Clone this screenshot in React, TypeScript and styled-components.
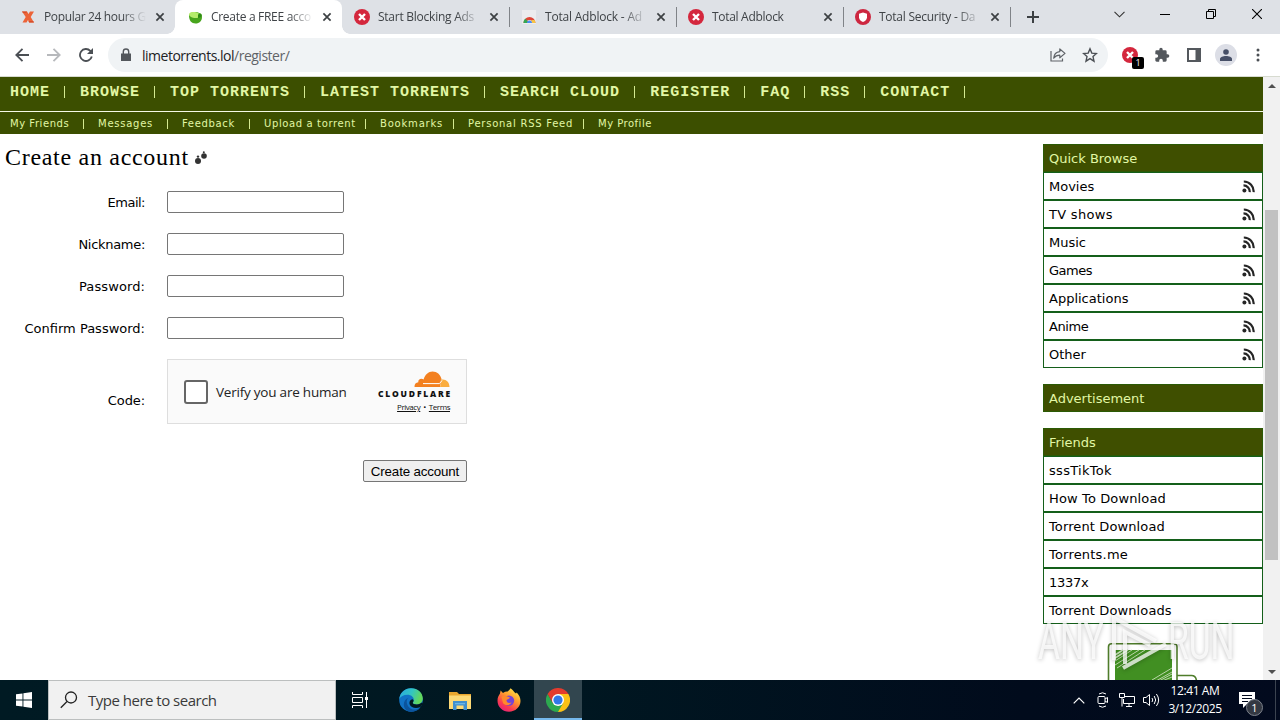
import React from "react";
import styled, { createGlobalStyle } from "styled-components";

const Global = createGlobalStyle`
  * { box-sizing: border-box; }
  html, body { margin: 0; padding: 0; overflow: hidden; background: #fff; }
  svg { display: block; flex: none; }
`;

const uiFont = `"Open Sans", "Noto Sans", sans-serif`;
const pageFont = `"DejaVu Sans", Verdana, sans-serif`;

const Screen = styled.div`
  width: 1280px;
  height: 720px;
  display: flex;
  flex-direction: column;
  overflow: hidden;
  background: #fff;
`;

/* ---------- browser chrome ---------- */

const TabStrip = styled.div`
  height: 34px;
  flex: none;
  display: flex;
  padding-left: 8px;
  background: #dee1e6;
`;

const Tab = styled.div<{ $active?: boolean; $divider?: boolean }>`
  position: relative;
  width: 167px;
  height: 34px;
  display: flex;
  align-items: center;
  padding: 0 0 0 12px;
  background: ${(p) => (p.$active ? "#fff" : "transparent")};
  border-radius: 8px 8px 0 0;
  &::before, &::after {
    content: "";
    display: ${(p) => (p.$active || p.$divider ? "block" : "none")};
    position: absolute;
    bottom: 0;
  }
  &::before {
    left: -8px;
    width: ${(p) => (p.$active ? "8px" : "0")};
    height: 8px;
    background: radial-gradient(circle at 0 0, transparent 7.5px, #fff 8px);
  }
  &::after {
    right: ${(p) => (p.$active ? "-8px" : "-1px")};
    bottom: ${(p) => (p.$active ? "0" : "7px")};
    width: ${(p) => (p.$active ? "8px" : "1px")};
    height: ${(p) => (p.$active ? "8px" : "20px")};
    background: ${(p) => (p.$active ? "radial-gradient(circle at 100% 0, transparent 7.5px, #fff 8px)" : "#808388")};
  }
`;

const TabTitle = styled.span<{ $track: number }>`
  width: 103px;
  margin: 0 8px 0 8px;
  white-space: nowrap;
  font: 12px/18px ${uiFont};
  letter-spacing: ${(p) => p.$track}px;
  color: #3f4347;
  mask-image: linear-gradient(to right, #000 78px, transparent 102px);
`;

const NewTab = styled.div`
  width: 46px;
  display: flex;
  align-items: center;
  justify-content: center;
`;

const WindowButtons = styled.div`
  margin-left: auto;
  display: flex;
  height: 28px;
`;

const WindowButton = styled.div`
  width: 46px;
  display: flex;
  align-items: center;
  justify-content: center;
`;

const Toolbar = styled.div`
  height: 43px;
  flex: none;
  display: flex;
  align-items: center;
  padding: 0 6px;
  background: #fff;
  border-bottom: 1px solid #d7dbd0;
`;

const ToolButton = styled.div`
  position: relative;
  width: 32px;
  height: 32px;
  display: flex;
  align-items: center;
  justify-content: center;
`;

const AddressBar = styled.div`
  width: 1000px;
  height: 34px;
  margin: 0 6px;
  padding: 0 2px 0 12px;
  display: flex;
  align-items: center;
  border-radius: 17px;
  background: #f0f3f5;
`;

const Url = styled.span`
  margin-left: 10px;
  padding-top: 1px;
  flex: 1;
  font: 14px/20px ${uiFont};
  letter-spacing: -0.5px;
  color: #5f6368;
  b { font-weight: 400; color: #202124; }
`;

const Badge = styled.span`
  position: absolute;
  left: 18px;
  top: 18px;
  width: 12px;
  height: 12px;
  border-radius: 2px;
  background: #000;
  color: #fff;
  font: 9px/12px ${uiFont};
  text-align: center;
`;

const Avatar = styled.div`
  width: 22px;
  height: 22px;
  border-radius: 50%;
  background: #dcdee6;
  display: flex;
  align-items: center;
  justify-content: center;
`;

/* ---------- web page ---------- */

const Viewport = styled.div`
  position: relative;
  height: 603px;
  flex: none;
  display: flex;
  overflow: hidden;
`;

const Page = styled.div`
  width: 1263px;
  display: flex;
  flex-direction: column;
`;

const MainNav = styled.nav`
  height: 34px;
  flex: none;
  display: flex;
  padding: 5px 0 0 10px;
  background: #3c4f00;
`;

const MainLink = styled.a`
  display: flex;
  height: 20px;
  font: bold 15px/21px "Liberation Mono", "Courier New", monospace;
  letter-spacing: 1px;
  color: #e2f7a5;
  white-space: pre;
  &::after {
    content: "";
    width: 1px;
    height: 12px;
    margin: 4px 15px 0 14px;
    background: #d5ea92;
  }
`;

const SubNav = styled.nav`
  height: 23px;
  flex: none;
  display: flex;
  padding-left: 10px;
  border-top: 1px solid #f5f9e6;
  background: #3c4f00;
`;

const SubLink = styled.a<{ $width: number; $last?: boolean; $track: number }>`
  width: ${(p) => p.$width}px;
  display: flex;
  justify-content: space-between;
  font: 10px/23px ${pageFont};
  letter-spacing: ${(p) => p.$track}px;
  white-space: nowrap;
  color: #e2f7a5;
  &::after {
    content: "";
    display: ${(p) => (p.$last ? "none" : "block")};
    width: 1px;
    height: 10px;
    margin: 7px 14px 0 0;
    background: #d5ea92;
  }
`;

const Columns = styled.div`
  flex: 1;
  display: flex;
  justify-content: space-between;
`;

const Main = styled.main`
  width: 480px;
  font: 13px/20px ${pageFont};
  color: #000;
`;

const Heading = styled.h1`
  display: flex;
  align-items: center;
  gap: 5px;
  height: 47px;
  margin: 0 0 10px;
  padding-left: 5px;
  font: 24px/47px "Liberation Serif", Georgia, serif;
  letter-spacing: 0.7px;
`;

const FormRow = styled.div<{ $height?: number }>`
  display: grid;
  grid-template-columns: 145px 300px;
  column-gap: 22px;
  align-items: center;
  height: ${(p) => p.$height ?? 22}px;
  margin-bottom: 20px;
`;

const Label = styled.label<{ $shift?: number; $track?: number }>`
  text-align: right;
  padding-top: ${(p) => p.$shift ?? 2}px;
  letter-spacing: ${(p) => p.$track ?? 0}px;
  white-space: nowrap;
`;

const Field = styled.input`
  width: 177px;
  height: 22px;
  border: 1px solid #767676;
  border-radius: 2px;
  background: #fff;
  outline: none;
`;

const Challenge = styled.div`
  width: 300px;
  height: 65px;
  display: flex;
  align-items: center;
  padding: 0 16px;
  border: 1px solid #dedede;
  background: #fafafa;
`;

const CheckSquare = styled.span`
  width: 24px;
  height: 24px;
  border: 2px solid #666;
  border-radius: 3px;
  background: #fff;
`;

const ChallengeText = styled.span`
  margin-left: 8px;
  flex: 1;
  font: 13.5px/20px ${uiFont};
  letter-spacing: -0.22px;
  color: #232323;
  white-space: nowrap;
`;

const Brand = styled.div`
  width: 76px;
  display: flex;
  flex-direction: column;
  align-items: flex-end;
`;

const BrandName = styled.span`
  margin: 1px -2px 0 0;
  font: 800 8.5px/9px "Open Sans", sans-serif;
  letter-spacing: 1.8px;
  color: #111;
`;

const BrandLinks = styled.span`
  margin-top: 4px;
  display: flex;
  gap: 3px;
  font: 8px/10px ${uiFont};
  letter-spacing: -0.45px;
  color: #111;
  u { text-underline-offset: 1px; }
`;

const SubmitRow = styled.div`
  width: 467px;
  display: flex;
  justify-content: flex-end;
  padding-top: 16px;
`;

const Submit = styled.button`
  width: 104px;
  height: 22px;
  padding: 1px 0 0;
  border: 1px solid #767676;
  border-radius: 2px;
  background: #efefef;
  color: #000;
  font: 13.333px/19px "Liberation Sans", Arial, sans-serif;
  letter-spacing: -0.15px;
  white-space: nowrap;
`;

const Sidebar = styled.aside`
  width: 220px;
  padding-top: 10px;
  display: flex;
  flex-direction: column;
  gap: 16px;
  font: 13px/26px ${pageFont};
`;

const PanelHead = styled.div`
  height: 28px;
  padding: 1px 0 0 5px;
  border: 1px solid #2b5a05;
  background: #3f4f00;
  color: #e2f7a5;
`;

const PanelRow = styled.div<{ $track?: number }>`
  height: 28px;
  display: flex;
  align-items: center;
  justify-content: space-between;
  padding: 0 7px 0 5px;
  border: 1px solid #145f1a;
  letter-spacing: ${(p) => p.$track ?? 0}px;
  color: #000;
`;

const PanelText = styled.span`
  padding-top: 2px;
`;

const Artwork = styled.div`
  margin: 3px 0 0 64px;
  height: 38px;
`;

const Scrollbar = styled.div`
  width: 17px;
  display: flex;
  flex-direction: column;
  align-items: center;
  justify-content: space-between;
  background: #f1f1f1;
`;

const ScrollTrack = styled.div`
  flex: 1;
  padding-top: 116px;
`;

const Thumb = styled.div`
  width: 13px;
  height: 350px;
  background: #c1c1c1;
`;

const ArrowBox = styled.div`
  width: 17px;
  height: 17px;
  display: flex;
  align-items: center;
  justify-content: center;
`;

const Watermark = styled.div`
  position: absolute;
  left: 1038px;
  top: 537px;
  width: 200px;
  height: 60px;
  color: rgba(255, 255, 255, 0.75);
  filter: drop-shadow(0 1px 2px rgba(0, 0, 0, 0.33));
`;

const WatermarkWord = styled.span<{ $left: number }>`
  position: absolute;
  left: ${(p) => p.$left}px;
  top: 2px;
  font: 400 51px/52px Roboto, sans-serif;
  transform: scaleX(0.66);
  transform-origin: 0 0;
`;

const WatermarkPlay = styled.svg`
  position: absolute;
  left: 72px;
  top: 0;
`;

/* ---------- taskbar ---------- */

const Taskbar = styled.div`
  height: 40px;
  flex: none;
  display: flex;
  background: linear-gradient(to right, #001a23 0, #001721 45%, #010b1c 80%, #020a1e 100%);
`;

const TaskItem = styled.div<{ $active?: boolean; $width: number }>`
  width: ${(p) => p.$width}px;
  display: flex;
  align-items: center;
  justify-content: center;
  background: ${(p) => (p.$active ? "#32464f" : "transparent")};
  border-bottom: ${(p) => (p.$active ? "2px solid #76b9ed" : "0")};
  padding-top: ${(p) => (p.$active ? "2px" : "0")};
`;

const SearchBox = styled.div`
  width: 288px;
  display: flex;
  align-items: center;
  gap: 10px;
  padding-left: 11px;
  border: 1px solid #bcbfbf;
  background: #f1f1f1;
  font: 15px/22px ${uiFont};
  letter-spacing: -0.5px;
  color: #3a3a3a;
`;

const Tray = styled.div`
  margin-left: auto;
  display: flex;
  padding-right: 4px;
`;

const Clock = styled.div`
  width: 64px;
  padding-top: 2px;
  text-align: center;
  font: 12px/18px ${uiFont};
  letter-spacing: -0.4px;
  color: #fff;
  white-space: nowrap;
`;

const Notice = styled.div`
  position: relative;
  width: 48px;
  padding: 12px 0 0 12px;
`;

const NoticeCount = styled.span`
  position: absolute;
  left: 19px;
  top: 19px;
  width: 17px;
  height: 17px;
  border: 1px solid #7d828c;
  border-radius: 50%;
  background: #333842;
  color: #fff;
  font: 11px/15px ${uiFont};
  text-align: center;
`;

const ShowDesktop = styled.div`
  width: 1px;
  background: #3b4350;
`;

/* ---------- drawings ---------- */

const CloseX = () => (
  <svg width="10" height="10" viewBox="0 0 10 10" stroke="#3c4043" strokeWidth="1.7">
    <path d="M1.4 1.4 8.6 8.6M8.6 1.4 1.4 8.6" />
  </svg>
);

const OrangeX = () => (
  <svg width="16" height="16" viewBox="0 0 16 16">
    <path d="M2 2.500h5l1.500 2.500L10 2.500h4L10.700 8l3.300 5.500H9.200L8 11l-1.500 2.500h-4L5.700 8Z" fill="#ec6338" />
    <path d="M2 2.500h5l-.7 1.500H3ZM9.200 13.500 8.500 12h4.700l.8 1.500Z" fill="#d64f2b" />
  </svg>
);

const Lime = () => (
  <svg width="16" height="16" viewBox="0 0 16 16">
    <path d="M2 6.500C2 11.500 4.500 14.500 8.500 14.500S15 12 15 8c0-3-1-4-3-4-2-1.500-9-1.500-10 2.500Z" fill="#48a51d" />
    <ellipse cx="7.500" cy="6" rx="5.500" ry="3" fill="#b5ec6b" transform="rotate(8 7.500 6)" />
    <path d="M11 5.500c2-1.500 3.500-.5 3.500 1s-2 2.500-3.500 2.500Z" fill="#2f8a16" />
  </svg>
);

const RedX = () => (
  <svg width="16" height="16" viewBox="0 0 16 16">
    <circle cx="8" cy="8" r="8" fill="#d4273d" />
    <path d="m5 5 6 6m0-6-6 6" stroke="#fff" strokeWidth="2.400" />
  </svg>
);

const StoreIcon = () => (
  <svg width="16" height="16" viewBox="0 0 16 16">
    <path d="M1 1h14v14H1z" fill="#ececee" />
    <path d="M2.500 14a6 6 0 0 1 12 0h-3a3 3 0 0 0-6 0Z" fill="#df4637" />
    <path d="M2.500 14c0-2 .6-3.300 1.900-4.200L7 12.500V14Z" fill="#35a853" />
    <path d="M10.500 11h3.200l.8 3h-4Z" fill="#f6c344" />
    <path d="M6 14a2.500 2.500 0 0 1 5 0Z" fill="#4c8bf5" />
  </svg>
);

const RedShield = () => (
  <svg width="16" height="16" viewBox="0 0 16 16">
    <circle cx="8" cy="8" r="8" fill="#cd2740" />
    <path d="M8 3.500 12 4.800v3.400c0 2.300-1.800 3.900-4 4.800-2.200-.9-4-2.500-4-4.800V4.800Z" fill="#fff" />
  </svg>
);

const Rss = () => (
  <svg width="13" height="13" viewBox="0 0 13 13" fill="none" stroke="#252525" strokeWidth="2.200">
    <circle cx="2.400" cy="10.600" r="2" fill="#252525" stroke="none" />
    <path d="M1.500 5.400a6.200 6.200 0 0 1 6.200 6.800M1.800 1.500A9.800 9.800 0 0 1 11.600 12.200" />
  </svg>
);

const Cloud = () => (
  <svg width="36" height="17" viewBox="0 0 36 17">
    <path d="M.5 16C.3 13 2 11.500 4.300 11.300 3.800 8 7.500 6.700 9.600 8.500 11 3.500 14.500.5 18.500.5c4.500 0 8 3 9 7.500l-1.500 8Z" fill="#f38020" />
    <path d="m26 16 1.300-5.500-1-1.500c5-1.500 9 1.500 9.200 7Z" fill="#faad3f" />
    <path d="M9 12.600h16.500l2.500-3.200" fill="none" stroke="#fff" strokeWidth="1" />
  </svg>
);

const Comments = () => (
  <svg width="14" height="14" viewBox="0 0 14 14" fill="#333">
    <circle cx="4" cy="10" r="3" />
    <circle cx="10" cy="5" r="2.800" />
    <circle cx="4" cy="5.600" r="1.200" />
    <circle cx="9.800" cy="1.200" r="1" />
  </svg>
);

const MonitorArt = () => (
  <svg width="92" height="38" viewBox="0 0 92 38" fill="none">
    <path d="M1.500 38V4Q1.500.8 4.500.8h62Q70 .8 70 4v34M70 32.500h14.500q4.500 0 5 5.500" stroke="#4f7d2b" strokeWidth="1.600" />
    <path d="M8 7h57v31H8z" fill="#418f22" />
    <path d="M8 18 25 7M8 22 32 7M10 25 38 7M49 38 65 29M52 38 65 31M55 38 65 34M45 37 65 25" stroke="#b9d5a8" strokeWidth="1" />
    <path d="M8 12 16 7M8 15 21 7" stroke="#c9dfbc" strokeWidth="1.500" />
  </svg>
);

const WindowsLogo = () => (
  <svg width="16" height="16" viewBox="0 0 16 16" fill="#fff">
    <path d="M0 2.300 6.500 1.400v6.100H0ZM7.400 1.200 16 0v7.500H7.400ZM0 8.400h6.500v6.200L0 13.700ZM7.400 8.400H16V16l-8.600-1.200Z" />
  </svg>
);

const Edge = () => (
  <svg width="24" height="24" viewBox="0 0 24 24">
    <defs>
      <linearGradient id="edgeTop" x1="0" y1="0" x2="1" y2=".3">
        <stop offset="0" stopColor="#2aa9e0" />
        <stop offset=".55" stopColor="#32c5c4" />
        <stop offset="1" stopColor="#63d85a" />
      </linearGradient>
    </defs>
    <circle cx="12" cy="12" r="11.800" fill="#1173c6" />
    <path d="M.3 11C1 4.500 6 .2 12 .2c7 0 11.800 4.800 11.800 10.300 0 3.800-2.800 6-6 6-2.500 0-4-.8-4-1.700 0-.8 1-1.300 1-3C14.800 9 12 6.800 8.500 6.800 4.500 6.800 1.500 8.500.3 11Z" fill="url(#edgeTop)" />
    <path d="M9.500 9.800C7 11.500 7 17 10.800 20c3 2.300 7 2 10.700-.5-2.500 3-6 4.400-9.500 4.300C7 23.400 4.800 20 4.800 16.500c0-3 2-5.700 4.700-6.700Z" fill="#0b549d" />
    <path d="M13.800 14.800c0 .9 1.500 1.700 4 1.700 1.800 0 3.300-.6 4.400-1.700 1 0 1.800.2 1.500 1-.3 1-1 2-2.200 3.200-5 2.300-9.500.5-10.800-2.500-.8-2 .2-4.600 2.500-5.200 2.500.7 1 2.500.6 3.500Z" fill="#001821" />
  </svg>
);

const Folder = () => (
  <svg width="22" height="19" viewBox="0 0 22 19">
    <path d="M0 1h8l2 2h12v15H0Z" fill="#e9a72f" />
    <path d="M0 4.500h22V18H0Z" fill="#fcd976" />
    <path d="M4 10h14v9h-3.500v-4.500h-7V19H4Z" fill="#3f8fcf" />
    <path d="M6 12h10v1.300H6Z" fill="#68b5e8" />
  </svg>
);

const Firefox = () => (
  <svg width="24" height="24" viewBox="0 0 24 24">
    <defs>
      <linearGradient id="fox" x1=".85" y1=".05" x2=".25" y2="1">
        <stop offset="0" stopColor="#ffe94a" />
        <stop offset=".4" stopColor="#ff9a2e" />
        <stop offset=".75" stopColor="#fb3b50" />
        <stop offset="1" stopColor="#e32178" />
      </linearGradient>
    </defs>
    <path d="M3 5.500 3.600 2.500 6 5c1.500-1 3-1.500 4.700-1.400C12 2.500 13 1 13.500.2c2.500 1.500 3 3.500 5.500 5.300l.7-1c2.500 2.500 3.800 5.500 3.800 8.500C23.500 19 18.300 23.700 12 23.700S.5 19 .5 12.700c0-3 1-5 2.500-7.200Z" fill="url(#fox)" />
    <circle cx="12" cy="12.600" r="5.200" fill="#7443d8" />
    <path d="M4.500 9c2-2 4-1 6-.5l2.500 1c-.5 1.500-2.500 1.500-3.500 2.500 0 2.500 2 3.500 5 2.500-1.500 3-6.500 3.500-8.500.5Z" fill="#ff8a2b" />
  </svg>
);

const Chrome = () => (
  <svg width="24" height="24" viewBox="0 0 24 24">
    <path d="M12 12V6h10.400A12 12 0 0 1 12 24Z" fill="#fbc116" />
    <path d="M1.600 6 6.800 15 12 18l5.200-3L12 24A12 12 0 0 1 1.600 6Z" fill="#2da94f" />
    <path d="M1.600 6A12 12 0 0 1 22.400 6H12L6.800 9v6Z" fill="#e33b2e" />
    <circle cx="12" cy="12" r="6" fill="#fff" />
    <circle cx="12" cy="12" r="4.600" fill="#3078e8" />
  </svg>
);

/* ---------- content ---------- */

const tabs = [
  { title: "Popular 24 hours G", icon: <OrangeX />, track: -0.35 },
  { title: "Create a FREE acco", icon: <Lime />, active: true, track: -0.3 },
  { title: "Start Blocking Ads", icon: <RedX />, divider: true, track: -0.25 },
  { title: "Total Adblock - Ad", icon: <StoreIcon />, divider: true, track: -0.2 },
  { title: "Total Adblock", icon: <RedX />, divider: true, track: -0.3 },
  { title: "Total Security - Da", icon: <RedShield />, divider: true, track: -0.25 },
];

const mainLinks = ["HOME", "BROWSE", "TOP TORRENTS", "LATEST TORRENTS", "SEARCH CLOUD", "REGISTER", "FAQ", "RSS", "CONTACT"];

const subLinks: [string, number, number][] = [
  ["My Friends", 88, 0.55],
  ["Messages", 84, 0.75],
  ["Feedback", 82, 0.65],
  ["Upload a torrent", 116, 0.62],
  ["Bookmarks", 88, 0.8],
  ["Personal RSS Feed", 130, 0.75],
  ["My Profile", 70, 0.5],
];

const fields: [string, number][] = [
  ["Email:", -0.5],
  ["Nickname:", -0.3],
  ["Password:", 0.1],
  ["Confirm Password:", 0],
];

const categories: [string, number][] = [
  ["Movies", 0],
  ["TV shows", 0.3],
  ["Music", 0],
  ["Games", -0.5],
  ["Applications", 0],
  ["Anime", -0.4],
  ["Other", 0],
];

const friends: [string, number][] = [
  ["sssTikTok", 0.3],
  ["How To Download", 0.13],
  ["Torrent Download", 0.12],
  ["Torrents.me", 0.2],
  ["1337x", -0.3],
  ["Torrent Downloads", 0.12],
];

export default function App() {
  return (
    <Screen>
      <Global />
      <TabStrip>
        {tabs.map((t, i) => (
          <Tab key={i} $active={t.active} $divider={t.divider}>
            {t.icon}
            <TabTitle $track={t.track}>{t.title}</TabTitle>
            <CloseX />
          </Tab>
        ))}
        <NewTab>
          <svg width="12" height="12" viewBox="0 0 12 12" stroke="#3c4043" strokeWidth="2"><path d="M6 0v12M0 6h12" /></svg>
        </NewTab>
        <WindowButtons>
          <WindowButton>
            <svg width="11" height="7" viewBox="0 0 11 7" fill="none" stroke="#333" strokeWidth="1.1"><path d="m.5.8 5 5 5-5" /></svg>
          </WindowButton>
          <WindowButton>
            <svg width="10" height="2" viewBox="0 0 10 2"><path d="M0 1h10v1H0Z" fill="#000" /></svg>
          </WindowButton>
          <WindowButton>
            <svg width="10" height="10" viewBox="0 0 10 10" fill="none" stroke="#000"><path d="M.5 2.500h7v7h-7ZM2.500 2.500v-2h7v7h-2" /></svg>
          </WindowButton>
          <WindowButton>
            <svg width="10" height="10" viewBox="0 0 10 10" stroke="#000" strokeWidth="1.100"><path d="m0 0 10 10M10 0 0 10" /></svg>
          </WindowButton>
        </WindowButtons>
      </TabStrip>

      <Toolbar>
        <ToolButton>
          <svg width="14" height="14" viewBox="0 0 14 14" fill="none" stroke="#4b4f54" strokeWidth="1.8"><path d="M14 7H1.500M7.500.8 1.300 7l6.200 6.200" /></svg>
        </ToolButton>
        <ToolButton>
          <svg width="14" height="14" viewBox="0 0 14 14" fill="none" stroke="#b7b9bc" strokeWidth="1.8"><path d="M0 7h12.500M6.500.8 12.700 7l-6.200 6.200" /></svg>
        </ToolButton>
        <ToolButton>
          <svg width="14" height="14" viewBox="0 0 14 14" fill="none" stroke="#4b4f54" strokeWidth="1.8"><path d="M12.800 8.500A6 6 0 1 1 11.300 2.800L13 4.500" /><path d="M14 0v6H8Z" fill="#4b4f54" stroke="none" /></svg>
        </ToolButton>
        <AddressBar>
          <svg width="12" height="14" viewBox="0 0 12 14"><path d="M1 5.500h10V13H1Z" fill="#53575c" /><path d="M3.300 6V3.700a2.700 2.700 0 0 1 5.400 0V6" fill="none" stroke="#53575c" strokeWidth="1.400" /></svg>
          <Url><b>limetorrents.lol</b>/register/</Url>
          <ToolButton>
            <svg width="16" height="14" viewBox="0 0 16 14" fill="none" stroke="#5f6368" strokeWidth="1.200"><path d="M1 3v10h11.500v-2.500" /><path d="M9.800 1v2.600C6 4 4 6.500 3.700 10.200c1.500-2 3.300-3 6.100-3v2.600L15 5.400Z" strokeLinejoin="round" /></svg>
          </ToolButton>
          <ToolButton>
            <svg width="16" height="16" viewBox="0 0 16 16" fill="none" stroke="#4b4f54" strokeWidth="1.400"><path d="m8 1.800 1.800 4.300 4.700.4L11 9.600l1 4.600-4-2.500-4 2.500 1-4.600L1.500 6.500l4.700-.4Z" /></svg>
          </ToolButton>
        </AddressBar>
        <ToolButton>
          <RedX />
          <Badge>1</Badge>
        </ToolButton>
        <ToolButton>
          <svg width="16" height="16" viewBox="0 0 24 24" fill="#54585d"><path d="M20.500 11H19V7a2 2 0 0 0-2-2h-4V3.500a2.500 2.500 0 0 0-5 0V5H4a2 2 0 0 0-2 2v3.800h1.500a2.700 2.700 0 0 1 0 5.400H2V20c0 1.100.9 2 2 2h3.800v-1.500a2.700 2.700 0 0 1 5.400 0V22H17a2 2 0 0 0 2-2v-4h1.500a2.500 2.500 0 0 0 0-5Z" /></svg>
        </ToolButton>
        <ToolButton>
          <svg width="14" height="14" viewBox="0 0 14 14"><path d="M0 0h14v14H0Z" fill="#54585d" /><path d="M2 2h6.500v10H2Z" fill="#fff" /></svg>
        </ToolButton>
        <ToolButton>
          <Avatar>
            <svg width="12" height="12" viewBox="0 0 12 12" fill="#464f67"><circle cx="6" cy="3" r="2.800" /><path d="M0 12V10c0-2 3-3 6-3s6 1 6 3v2Z" /></svg>
          </Avatar>
        </ToolButton>
        <ToolButton>
          <svg width="4" height="14" viewBox="0 0 4 14" fill="#4b4f54"><circle cx="2" cy="2" r="1.500" /><circle cx="2" cy="7" r="1.500" /><circle cx="2" cy="12" r="1.500" /></svg>
        </ToolButton>
      </Toolbar>

      <Viewport>
        <Page>
          <MainNav>{mainLinks.map((l) => <MainLink key={l}>{l}</MainLink>)}</MainNav>
          <SubNav>
            {subLinks.map(([l, w, t], i) => (
              <SubLink key={l} $width={w} $track={t} $last={i === subLinks.length - 1}>{l}</SubLink>
            ))}
          </SubNav>
          <Columns>
            <Main>
              <Heading>Create an account <Comments /></Heading>
              {fields.map(([f, t]) => (
                <FormRow key={f}>
                  <Label $track={t}>{f}</Label>
                  <Field />
                </FormRow>
              ))}
              <FormRow $height={65}>
                <Label $shift={18} $track={-0.1}>Code:</Label>
                <Challenge>
                  <CheckSquare />
                  <ChallengeText>Verify you are human</ChallengeText>
                  <Brand>
                    <Cloud />
                    <BrandName>CLOUDFLARE</BrandName>
                    <BrandLinks><u>Privacy</u><span>•</span><u>Terms</u></BrandLinks>
                  </Brand>
                </Challenge>
              </FormRow>
              <SubmitRow><Submit>Create account</Submit></SubmitRow>
            </Main>
            <Sidebar>
              <div>
                <PanelHead>Quick Browse</PanelHead>
                {categories.map(([c, t]) => <PanelRow key={c} $track={t}><PanelText>{c}</PanelText><Rss /></PanelRow>)}
              </div>
              <PanelHead>Advertisement</PanelHead>
              <div>
                <PanelHead>Friends</PanelHead>
                {friends.map(([f, t]) => <PanelRow key={f} $track={t}><PanelText>{f}</PanelText></PanelRow>)}
              </div>
              <Artwork><MonitorArt /></Artwork>
            </Sidebar>
          </Columns>
        </Page>
        <Scrollbar>
          <ArrowBox><svg width="8" height="4" viewBox="0 0 8 4"><path d="M4 0 8 4H0Z" fill="#505050" /></svg></ArrowBox>
          <ScrollTrack><Thumb /></ScrollTrack>
          <ArrowBox><svg width="8" height="4" viewBox="0 0 8 4"><path d="M0 0h8L4 4Z" fill="#505050" /></svg></ArrowBox>
        </Scrollbar>
        <Watermark>
          <WatermarkWord $left={0}>ANY</WatermarkWord>
          <WatermarkPlay width="60" height="60" viewBox="0 0 60 60" fill="none" stroke="rgba(255,255,255,.75)" strokeWidth="4">
            <path d="M4 46V4l42 23M15 50V18l25 13M13 54l43-24" />
          </WatermarkPlay>
          <WatermarkWord $left={130}>RUN</WatermarkWord>
        </Watermark>
      </Viewport>

      <Taskbar>
        <TaskItem $width={48}><WindowsLogo /></TaskItem>
        <SearchBox>
          <svg width="18" height="18" viewBox="0 0 18 18" fill="none" stroke="#222" strokeWidth="1.300"><circle cx="11" cy="6.500" r="5.500" /><path d="M7 10.500.8 16.800" /></svg>
          Type here to search
        </SearchBox>
        <TaskItem $width={49}>
          <svg width="17" height="16" viewBox="0 0 17 16" fill="none" stroke="#fff"><path d="M.5 0v2.500h10V0M.5 5.500h10v5H.5ZM.5 16v-2.500h10V16M14.500 0v16" /><path d="M13 5h3v3h-3Z" fill="#fff" stroke="none" /></svg>
        </TaskItem>
        <TaskItem $width={52}><Edge /></TaskItem>
        <TaskItem $width={46}><Folder /></TaskItem>
        <TaskItem $width={51}><Firefox /></TaskItem>
        <TaskItem $active $width={48}><Chrome /></TaskItem>
        <Tray>
          <TaskItem $width={24}>
            <svg width="12" height="7" viewBox="0 0 12 7" fill="none" stroke="#fff" strokeWidth="1.200"><path d="m.7 6.300 5.300-5.300 5.300 5.300" /></svg>
          </TaskItem>
          <TaskItem $width={24}>
            <svg width="12" height="16" viewBox="0 0 12 16" fill="none" stroke="#fff"><rect x="1" y="4.500" width="7" height="7" rx="1" /><path d="m8 7 2.500-1.500v5L8 9M2 2Q5.500-.5 9 2M2 14q3.500 2.500 7 0" /></svg>
          </TaskItem>
          <TaskItem $width={24}>
            <svg width="16" height="14" viewBox="0 0 16 14" fill="none" stroke="#fff"><path d="M6 3.500h9.500v7h-11V6M10 10.500v3M7 13.500h6M.5.500h5v4h-5ZM3 4.500v9" /></svg>
          </TaskItem>
          <TaskItem $width={24}>
            <svg width="17" height="14" viewBox="0 0 17 14" fill="none" stroke="#fff"><path d="M.5 4.500h2.500L6.500 1.500v11L3 9.500H.5ZM9 5q1.500 2 0 4M11.200 3q3 4 0 8M13.400 1q4.500 6 0 12" /></svg>
          </TaskItem>
          <Clock>12:41 AM<br />3/12/2025</Clock>
          <Notice>
            <svg width="16" height="16" viewBox="0 0 16 16"><path d="M0 0h16v12H8l-4 4v-4H0Z" fill="#fff" /><path d="M3 3.500h10M3 6.500h10M3 9.500h6" stroke="#020a1e" /></svg>
            <NoticeCount>1</NoticeCount>
          </Notice>
          <ShowDesktop />
        </Tray>
      </Taskbar>
    </Screen>
  );
}
